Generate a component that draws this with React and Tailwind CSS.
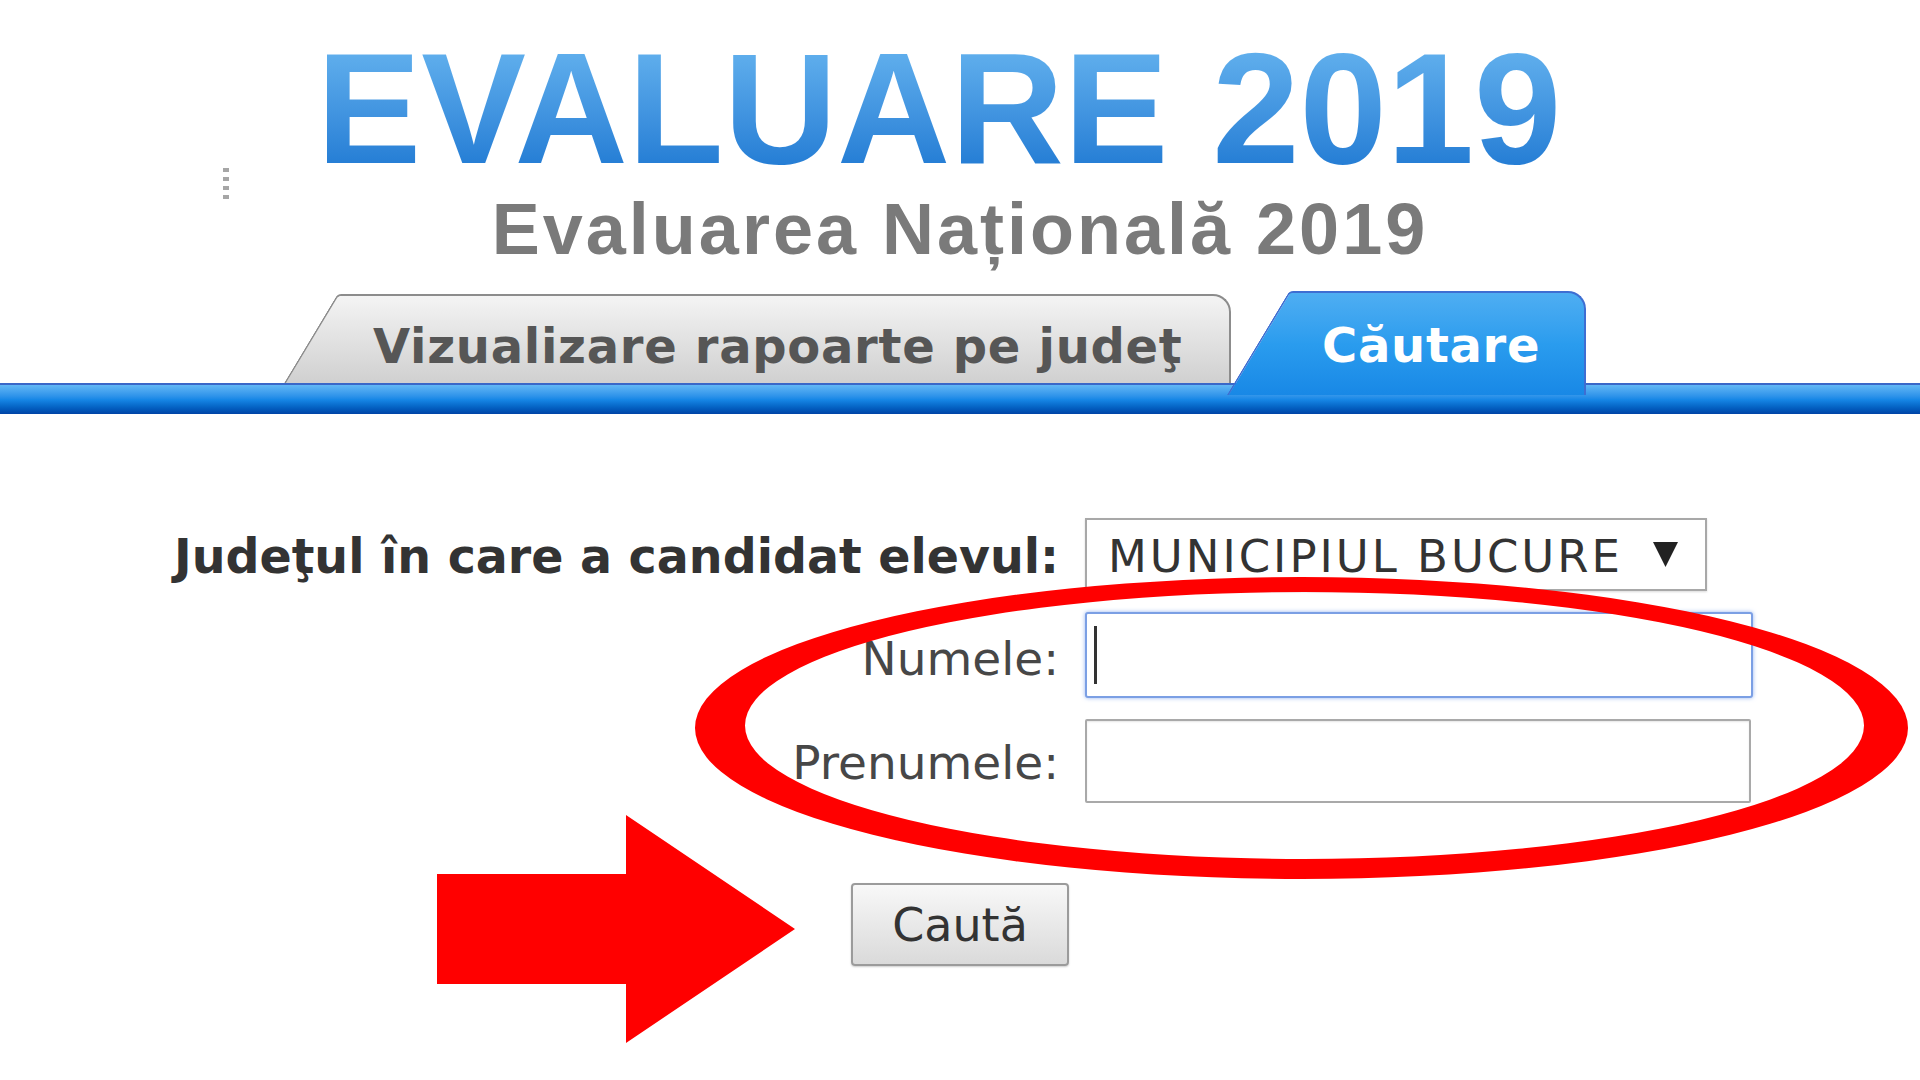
import React from 'react';

function Tab({ active, width, height, extra = 0, textPad, children }) {
  const border = active ? 'border-[#3e6ed2]' : 'border-[#8c8c8c]';
  const fill = active
    ? 'bg-linear-to-b from-[#4eaef2] via-[#2a9cee] to-[#1888e6]'
    : 'bg-linear-to-b from-[#f4f4f4] to-[#d0d0d0]';

  return (
    <div
      className={`relative flex ${active ? 'z-10' : ''}`}
      style={{ width, height: height + extra, marginBottom: -extra }}
    >
      {/* slanted left edge */}
      <div
        className={`absolute top-0 left-0 w-[150px] -skew-x-[31deg] rounded-tl-[4px] border-l-2 border-t-2 ${border} ${fill}`}
        style={{ height: height + extra, transformOrigin: `0 ${height}px` }}
      />
      <div
        className={`relative ml-[60px] flex flex-1 items-start rounded-tr-[18px] border-t-2 border-r-2 ${border} ${fill}`}
        style={{ paddingLeft: textPad, paddingTop: active ? 28 : 26 }}
      >
        <span
          className={`whitespace-nowrap text-[48px] font-bold leading-none tracking-[0.7px] ${
            active ? 'text-white' : 'text-[#565656]'
          }`}
        >
          {children}
        </span>
      </div>
    </div>
  );
}

export default function App() {
  return (
    <div className="relative min-h-screen w-full overflow-hidden bg-white font-['DejaVu_Sans',Verdana,sans-serif]">
      {/* little grip dots left of the title */}
      <div className="absolute left-[223px] top-[168px] flex flex-col gap-[5px]">
        <span className="h-[4px] w-[6px] bg-[#a6a6a6]" />
        <span className="h-[4px] w-[6px] bg-[#a6a6a6]" />
        <span className="h-[4px] w-[6px] bg-[#a6a6a6]" />
        <span className="h-[4px] w-[6px] bg-[#a6a6a6]" />
      </div>

      <header className="pt-[30px]">
        <div className="flex justify-center pr-[42px]">
          <h1 className="bg-linear-to-b from-[#6ab8f1] to-[#1674d0] bg-clip-text font-['Liberation_Sans',Arial,sans-serif] text-[157px] font-bold leading-none text-transparent">
            EVALUARE 2019
          </h1>
        </div>
        <div className="mt-[6px] flex justify-center">
          <h2 className="font-['Liberation_Sans',Arial,sans-serif] text-[72px] font-bold leading-none tracking-[3px] text-[#7a7a7a]">
            Evaluarea Națională 2019
          </h2>
        </div>
      </header>

      <nav className="mt-[26px] flex h-[92px] items-end pl-[284px]">
        <Tab width={947} height={89} textPad={29}>
          Vizualizare rapoarte pe judeţ
        </Tab>
        <div className="w-[3px]" />
        <Tab active width={352} height={92} extra={12} textPad={28}>
          Căutare
        </Tab>
      </nav>
      <div className="h-[31px] border-t-2 border-[#3a68c8] bg-linear-to-b from-[#62b8f5] via-[#1787e6] to-[#0043a6]" />

      <form className="mt-[104px]" onSubmit={(e) => e.preventDefault()}>
        <div className="grid grid-cols-[891px_auto] gap-x-[26px] gap-y-[21px] pl-[168px]">
          <label className="flex items-center justify-end whitespace-nowrap pt-[4px] text-[47.5px] font-bold leading-none text-[#333333]">
            Judeţul în care a candidat elevul:
          </label>
          <div className="flex h-[73px] w-[622px] items-center border-2 border-[#a8a8a8] bg-white pl-[21px] pr-[27px] shadow-[0_1px_2px_rgba(0,0,0,0.15)]">
            <span className="pt-[4px] text-[45px] leading-none tracking-[3px] text-[#333333]">
              MUNICIPIUL BUCURE
            </span>
            <svg className="ml-auto" width="25" height="25" viewBox="0 0 25 25">
              <polygon points="0,0 25,0 12.5,25" fill="#222" />
            </svg>
          </div>

          <label className="flex items-center justify-end pt-[6px] text-[47px] leading-none text-[#474747]">
            Numele:
          </label>
          <div className="flex h-[86px] w-[668px] items-center rounded-[3px] border-2 border-[#7b9fe4] bg-white pl-[7px] shadow-[0_0_4px_rgba(80,130,230,0.6)]">
            <span className="h-[58px] w-[3px] bg-[#333333]" />
          </div>

          <label className="flex items-center justify-end pt-[2px] text-[47px] leading-none text-[#474747]">
            Prenumele:
          </label>
          <div className="h-[84px] w-[666px] rounded-[2px] border-2 border-[#a9a9a9] bg-white shadow-[inset_0_1px_2px_rgba(0,0,0,0.1)]" />
        </div>

        <div className="mt-[80px] flex justify-center">
          <button
            type="submit"
            className="flex h-[83px] w-[218px] items-center justify-center rounded-[4px] border-2 border-[#9b9b9b] bg-linear-to-b from-[#f8f8f8] to-[#dadada] text-[46px] leading-none text-[#333333] shadow-[0_1px_2px_rgba(0,0,0,0.2)]"
          >
            Caută
          </button>
        </div>
      </form>

      {/* red annotations drawn over the form */}
      <svg
        className="pointer-events-none absolute left-0 top-0"
        width="1920"
        height="1080"
        viewBox="0 0 1920 1080"
      >
        <path
          fill="#ff0000"
          fillRule="evenodd"
          d="M695 728a606.5 151 0 1 0 1213 0a606.5 151 0 1 0 -1213 0Z M745 725.5a559.5 133.5 0 1 0 1119 0a559.5 133.5 0 1 0 -1119 0Z"
        />
        <polygon
          fill="#ff0000"
          points="437,874 626,874 626,815 795,929 626,1043 626,984 437,984"
        />
      </svg>
    </div>
  );
}
